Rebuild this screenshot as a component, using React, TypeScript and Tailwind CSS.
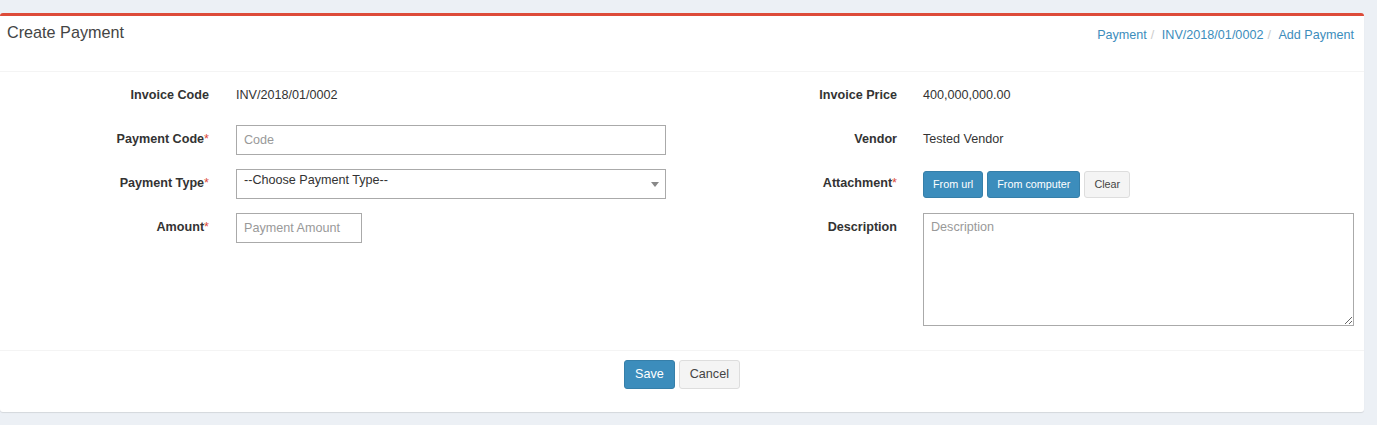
import React from "react";

const font = { fontFamily: '"Liberation Sans", Arial, sans-serif' };

const Req = () => <span className="text-[#dd4b39] font-normal">*</span>;

const Label = ({ children }: { children: React.ReactNode }) => (
  <div className="shrink-0 pt-[5px] text-right text-[12.6px] font-bold leading-[18px] text-[#333]">
    {children}
  </div>
);

const CreatePayment = () => {
  return (
    <div className="min-h-[425px] bg-[#ecf0f5] pt-[13px] pr-[13px]" style={font}>
      <div className="rounded-[3px] border-t-[3px] border-[#dd4b39] bg-white shadow-[0_1px_1px_rgba(0,0,0,0.1)]">
        {/* header */}
        <div className="flex h-[56px] items-start justify-between border-b border-[#f4f4f4] pl-[7px] pr-[10px]">
          <h3 className="pt-[7px] text-[16.2px] leading-[18px] text-[#444]">Create Payment</h3>
          <ol className="flex pt-[10px] text-[12.6px] leading-[18px] text-[#3c8dbc]">
            <li>Payment</li>
            <li className="px-[4px] text-[#ccc]">/{"\u00a0"}</li>
            <li>INV/2018/01/0002</li>
            <li className="px-[4px] text-[#ccc]">/{"\u00a0"}</li>
            <li>Add Payment</li>
          </ol>
        </div>

        {/* body */}
        <div className="flex border-b border-[#f4f4f4] pt-[9px] pb-[24px] text-[12.6px] text-[#333]">
          <div className="flex w-[682px] flex-col gap-[14px]">
            <div className="flex h-[30px]">
              <div className="w-[209px]"><Label>Invoice Code</Label></div>
              <div className="ml-[27px] pt-[5px] leading-[18px]">INV/2018/01/0002</div>
            </div>
            <div className="flex h-[30px]">
              <div className="w-[209px]"><Label>Payment Code<Req /></Label></div>
              <input
                placeholder="Code"
                className="ml-[27px] h-[30px] w-[430px] border border-[#aaa] px-[7px] text-[12.6px] outline-none placeholder:text-[#999]"
              />
            </div>
            <div className="flex h-[30px]">
              <div className="w-[209px]"><Label>Payment Type<Req /></Label></div>
              <div className="relative ml-[27px] h-[30px] w-[430px] border border-[#aaa] pl-[7px] leading-[20px] text-[#333]">
                --Choose Payment Type--
                <span className="absolute right-[6px] top-[12px] h-0 w-0 border-x-[4px] border-t-[5px] border-x-transparent border-t-[#888]" />
              </div>
            </div>
            <div className="flex h-[30px]">
              <div className="w-[209px]"><Label>Amount<Req /></Label></div>
              <input
                placeholder="Payment Amount"
                className="ml-[27px] h-[30px] w-[126px] border border-[#aaa] px-[7px] text-[12.6px] outline-none placeholder:text-[#999]"
              />
            </div>
          </div>

          <div className="flex flex-1 flex-col gap-[14px]">
            <div className="flex h-[30px]">
              <div className="w-[215px]"><Label>Invoice Price</Label></div>
              <div className="ml-[26px] pt-[5px] leading-[18px]">400,000,000.00</div>
            </div>
            <div className="flex h-[30px]">
              <div className="w-[215px]"><Label>Vendor</Label></div>
              <div className="ml-[26px] pt-[5px] leading-[18px]">Tested Vendor</div>
            </div>
            <div className="flex h-[30px]">
              <div className="w-[215px]"><Label>Attachment<Req /></Label></div>
              <div className="ml-[26px] flex gap-[4px] pt-[2px]">
                <button className="h-[27px] rounded-[3px] border border-[#367fa9] bg-[#3c8dbc] px-[9px] text-[10.8px] text-white">
                  From url
                </button>
                <button className="h-[27px] rounded-[3px] border border-[#367fa9] bg-[#3c8dbc] px-[9px] text-[10.8px] text-white">
                  From computer
                </button>
                <button className="h-[27px] rounded-[3px] border border-[#ddd] bg-[#f4f4f4] px-[9px] text-[10.8px] text-[#444]">
                  Clear
                </button>
              </div>
            </div>
            <div className="flex">
              <div className="w-[215px]"><Label>Description</Label></div>
              <textarea
                placeholder="Description"
                className="ml-[26px] h-[113px] w-[431px] border border-[#aaa] px-[7px] pt-[4px] text-[12.6px] outline-none placeholder:text-[#999]"
              />
            </div>
          </div>
        </div>

        {/* footer */}
        <div className="flex h-[61px] justify-center gap-[4px] pt-[9px] text-[12.6px]">
          <button className="h-[29px] rounded-[3px] border border-[#367fa9] bg-[#3c8dbc] px-[10px] text-white">
            Save
          </button>
          <button className="h-[29px] rounded-[3px] border border-[#ddd] bg-[#f4f4f4] px-[10px] text-[#444]">
            Cancel
          </button>
        </div>
      </div>
    </div>
  );
};

export default CreatePayment;
